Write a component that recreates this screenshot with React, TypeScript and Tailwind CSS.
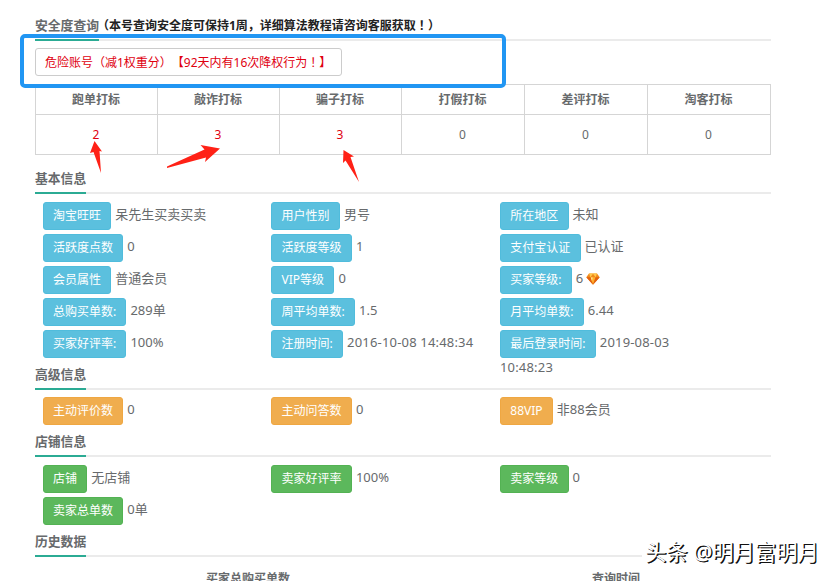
import type { ReactNode } from "react";
import clsx from "clsx";

type Tone = "info" | "warning" | "success";

interface Field {
  label: string;
  value: string;
  gem?: boolean;
}

const TONES: Record<Tone, string> = {
  info: "bg-[#5bc0de] border-[#50bcdc]",
  warning: "bg-[#f0ad4e] border-[#efa742]",
  success: "bg-[#5cb85c] border-[#53b253]",
};

const MARKS = [
  { name: "跑单打标", count: 2, width: "w-[122px]" },
  { name: "敲诈打标", count: 3, width: "w-[122px]" },
  { name: "骗子打标", count: 3, width: "w-[122px]" },
  { name: "打假打标", count: 0, width: "w-[123px]" },
  { name: "差评打标", count: 0, width: "w-[123px]" },
  { name: "淘客打标", count: 0, width: "w-[123px]" },
];

const BASIC: Field[] = [
  { label: "淘宝旺旺", value: "呆先生买卖买卖" },
  { label: "用户性别", value: "男号" },
  { label: "所在地区", value: "未知" },
  { label: "活跃度点数", value: "0" },
  { label: "活跃度等级", value: "1" },
  { label: "支付宝认证", value: "已认证" },
  { label: "会员属性", value: "普通会员" },
  { label: "VIP等级", value: "0" },
  { label: "买家等级:", value: "6", gem: true },
  { label: "总购买单数:", value: "289单" },
  { label: "周平均单数:", value: "1.5" },
  { label: "月平均单数:", value: "6.44" },
  { label: "买家好评率:", value: "100%" },
  { label: "注册时间:", value: "2016-10-08 14:48:34" },
  { label: "最后登录时间:", value: "2019-08-03 10:48:23" },
];

const ADVANCED: Field[] = [
  { label: "主动评价数", value: "0" },
  { label: "主动问答数", value: "0" },
  { label: "88VIP", value: "非88会员" },
];

const SHOP: Field[] = [
  { label: "店铺", value: "无店铺" },
  { label: "卖家好评率", value: "100%" },
  { label: "卖家等级", value: "0" },
  { label: "卖家总单数", value: "0单" },
];

function Gem() {
  return (
    <svg className="ml-[3px] inline-block h-3 w-3.5 align-[-2px]" viewBox="0 0 14 12">
      <path d="M3 .5h8l2.7 3.7L7 11.7.3 4.2z" fill="#f08a1c" />
      <path d="M3 .5 4.4 4.2 7 .8l2.6 3.4L11 .5z" fill="#ffc94a" />
      <path d="M4.4 4.2h5.2L7 11z" fill="#ffae2a" />
      <path d="M.3 4.2h4.1L7 11.7zM9.6 4.2h4.1L7 11.7z" fill="#e2600f" />
      <path d="m5 4.6 1 3.6.6-3.6z" fill="#fff0a8" />
    </svg>
  );
}

// centred exclamation mark
function Bang() {
  return <span className="font-['Noto_Sans_CJK_TC',sans-serif] leading-none">！</span>;
}

function SectionTitle({ title, children }: { title: string; children?: ReactNode }) {
  return (
    <div className="flex h-7 items-stretch border-b-2 border-[#ebebeb]">
      <h2 className="-mb-0.5 border-b-2 border-[#2bab94] text-[12.8px] leading-6 font-semibold text-[#676a6c]">{title}</h2>
      {children}
    </div>
  );
}

function FieldGrid({ fields, tone, className }: { fields: Field[]; tone: Tone; className?: string }) {
  return (
    <div className={clsx("grid auto-rows-[32px] grid-cols-[228.7px_228.7px_229px] pl-[7.6px]", className)}>
      {fields.map((f) => (
        <div key={f.label} className={clsx("pr-[15px] text-[13px] leading-[18px]", f.value.includes("-") && "tracking-[0.18px]")}>
          <span className={clsx("mr-1 inline-block h-7 rounded-[3px] border px-[9.3px] align-middle text-xs leading-[26px] tracking-normal text-white", TONES[tone])}>
            {f.label}
          </span>
          {f.value}
          {f.gem && <Gem />}
        </div>
      ))}
    </div>
  );
}

export default function App() {
  return (
    <div className="relative h-[581px] w-[837px] overflow-hidden bg-white pt-[13px] pl-[35px] font-['Noto_Sans','Noto_Sans_CJK_SC',sans-serif] text-[#676a6c] [text-spacing-trim:space-all]">
      <main className="w-[736px]">
        {/* safety check */}
        <SectionTitle title="安全度查询">
          <strong className="-ml-0.5 text-xs leading-[26px] font-bold text-[#222]">
            （本号查询安全度可保持1周，详细算法教程请咨询客服获取<Bang />）
          </strong>
        </SectionTitle>
        <div className="mt-[7px] flex">
          <p className="h-7 w-[307px] rounded-[3px] border border-[#ccc] pl-[9px] text-xs leading-[27px] whitespace-nowrap text-[#e0000f]">
            危险账号（减1权重分）【92天内有16次降权行为<Bang />】
          </p>
        </div>
        <table className="mt-2 w-[736px] table-fixed border-collapse text-center text-xs">
          <thead>
            <tr className="h-[30px]">
              {MARKS.map((m) => (
                <th key={m.name} className={clsx("border border-[#d5d5d5] p-0 pr-px font-semibold", m.width)}>{m.name}</th>
              ))}
            </tr>
          </thead>
          <tbody>
            <tr className="h-10">
              {MARKS.map((m) => (
                <td key={m.name} className={clsx("border border-[#d5d5d5] p-0 pr-px", m.count > 0 && "text-[#e0000f]")}>{m.count}</td>
              ))}
            </tr>
          </tbody>
        </table>

        <div className="mt-[11px]">
          <SectionTitle title="基本信息" />
          <FieldGrid fields={BASIC} tone="info" className="pt-2" />
        </div>
        <SectionTitle title="高级信息" />
        <FieldGrid fields={ADVANCED} tone="warning" className="pt-[7px]" />
        <SectionTitle title="店铺信息" />
        <FieldGrid fields={SHOP} tone="success" className="pt-2" />
        <SectionTitle title="历史数据" />
        <div className="grid grid-cols-[426px_310px] pt-[13px] text-center text-xs leading-[18px] font-semibold">
          <span>买家总购买单数</span>
          <span>查询时间</span>
        </div>
      </main>

      {/* highlight frame and arrows drawn over the page */}
      <div className="absolute top-[34px] left-5 h-[54px] w-[486px] rounded-[5px] border-4 border-[#2196f3]" />
      <svg className="absolute top-0 left-0 h-[200px] w-[400px]" viewBox="0 0 400 200" fill="#ff2116">
        <path d="M94.5 141 102 151.5 99.5 151 101 173 93.5 152 90 153z" />
        <path d="M220 148.5 200.5 145 204.5 149.5 167 166.5 167 168 206 157.5 205 162z" />
        <path d="M343.5 150 354 156.5 350.5 157 359 182 345.5 160.5 343 163z" />
      </svg>

      {/* watermark */}
      <div className="absolute top-[537px] left-[642px] bg-white pr-2 pl-[3px] text-[21.3px] leading-[30px] whitespace-nowrap text-white [text-shadow:1px_1px_0_#111,1.4px_1px_0_#111]">
        头条 @明月富明月
      </div>
    </div>
  );
}
